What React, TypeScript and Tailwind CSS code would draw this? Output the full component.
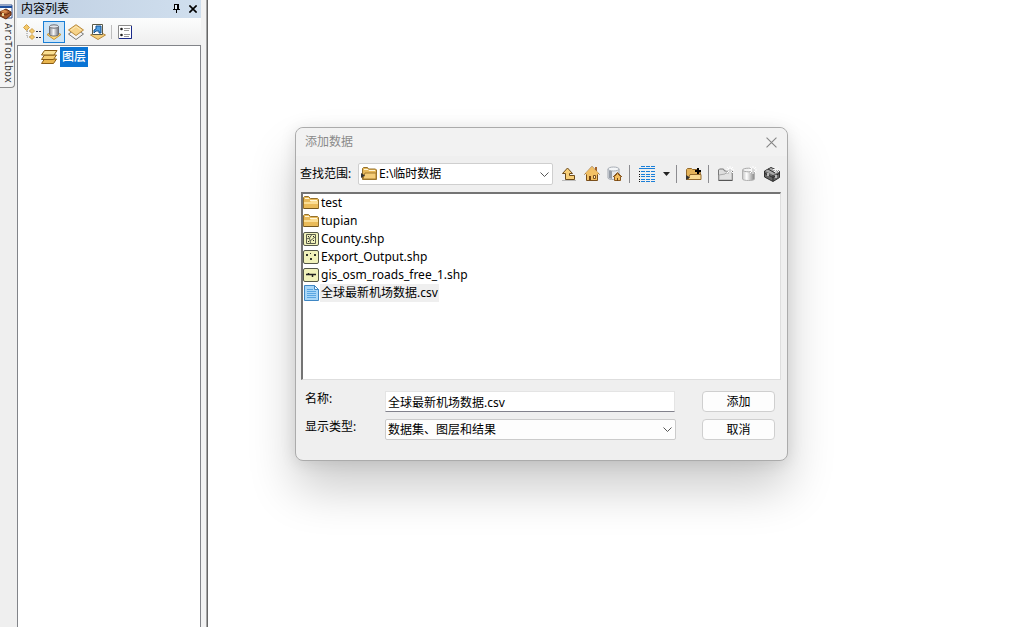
import React from "react";

type IconProps = { className?: string };

const ToolboxTabIcon = () => (
  <svg width="14" height="16" viewBox="0 0 14 16" aria-hidden="true">
    <path d="M0 1h12v13H6" fill="#fff" stroke="#2f4f8f" />
    <path d="M0 2h12v2H0z" fill="#1d4f9e" />
    <path d="M0 8l6-3 5 3v3l-5 4-6-3z" fill="#a8582a" stroke="#5d2b12" />
    <path d="M0 9l6 2 5-3" fill="none" stroke="#6b3212" />
    <path d="M0 7l5-1 3 2-3 1z" fill="#d98d4e" />
    <path d="M2 9h2v3H2z" fill="#e6cf8f" />
  </svg>
);

const DrawingOrderIcon = () => (
  <svg width="18" height="16" viewBox="0 0 18 16" aria-hidden="true">
    <path d="M4 5v8h5M4 7h6" fill="none" stroke="#8c8c8c" strokeDasharray="1 1" />
    <path d="M3.500 .5l3 3-3 3-3-3z" fill="#f3c96a" stroke="#d0a04a" />
    <path d="M9 4.500l2.500 2.500L9 9.500 6.500 7z" fill="#f3c96a" stroke="#d0a04a" />
    <path d="M9 10.500l2.500 2.500L9 15.500 6.500 13z" fill="#f3c96a" stroke="#d0a04a" />
    <path d="M13 7.500h2M16 7.500h2M13 13.500h2M16 13.500h2" stroke="#2b2f45" />
  </svg>
);

const SourceIcon = () => (
  <svg width="16" height="16" viewBox="0 0 16 16" aria-hidden="true">
    <defs>
      <linearGradient id="cylinder" x1="0" x2="1">
        <stop offset="0" stopColor="#85878d" />
        <stop offset="0.450" stopColor="#f5f6f8" />
        <stop offset="1" stopColor="#6d7078" />
      </linearGradient>
    </defs>
    <path d="M1 10.500L8 7l7 3.500-7 5z" fill="#ffd97a" stroke="#c99432" />
    <path d="M3.500 2.500v8c0 2 9 2 9 0v-8z" fill="url(#cylinder)" stroke="#6b6e76" />
    <ellipse cx="8" cy="2.500" rx="4.500" ry="1.700" fill="#e3e5e9" stroke="#6b6e76" />
  </svg>
);

const VisibilityIcon = () => (
  <svg width="16" height="16" viewBox="0 0 16 16" aria-hidden="true">
    <path d="M.5 10L8 5l7.500 5L8 15.500z" fill="#f4f4f4" stroke="#777" />
    <path d="M.5 6L8 .7 15.500 6 8 11.500z" fill="#f6d38a" stroke="#b98a3c" />
    <path d="M3 6l5-3.500L13 6" fill="none" stroke="#fdebb8" />
  </svg>
);

const SelectionIcon = () => (
  <svg width="16" height="16" viewBox="0 0 16 16" aria-hidden="true">
    <path d="M.5 11L8 7l7.500 4L8 15.500z" fill="#f6cf7b" stroke="#b98a3c" />
    <path d="M2.500.5h10v10h-10z" fill="#fff" stroke="#5a5a48" />
    <path d="M6 2h5v7H9V7H6L4 9V6l2-1z" fill="#4fa0e6" stroke="#14508f" />
  </svg>
);

const OptionsIcon = () => (
  <svg width="14" height="14" viewBox="0 0 14 14" aria-hidden="true">
    <path d="M.5.5h13v13H.5z" fill="#fff" stroke="#8b8b8b" />
    <path d="M13.500 1v12.500H1" fill="none" stroke="#1a2a8a" />
    <circle cx="3.500" cy="4" r="1.300" fill="#222" />
    <circle cx="3.500" cy="10" r="1.300" fill="#222" />
    <path d="M6 3.500h6M6 5.500h5M6 9.500h6M6 11.500h5" stroke="#9a9a9a" />
  </svg>
);

const DataFrameIcon = () => (
  <svg width="17" height="14" viewBox="0 0 17 14" aria-hidden="true">
    <path d="M.5 13.500l3-4.500h12l-3 4.500z" fill="#e9b64e" stroke="#8a5c14" />
    <path d="M.5 9.500l3-4.500h12l-3 4.500z" fill="#f6cd72" stroke="#8a5c14" />
    <path d="M.5 5l3-4.500h12.500L13 5z" fill="#fbdf92" stroke="#8a5c14" />
  </svg>
);

const PinIcon = () => (
  <svg width="8" height="10" viewBox="0 0 8 10" aria-hidden="true" shapeRendering="crispEdges">
    <path d="M1 0h5v6H1z" fill="#000" />
    <path d="M2 1h2v5H2z" fill="#e4ecf5" />
    <path d="M0 5h7v1H0zM3 6h1v3H3z" fill="#000" />
  </svg>
);

const CrossIcon = ({ className }: IconProps) => (
  <svg className={className} viewBox="0 0 10 10" fill="none" stroke="currentColor" aria-hidden="true">
    <path d="M.5.5l9 9M9.500.5l-9 9" />
  </svg>
);

const ChevronIcon = ({ className }: IconProps) => (
  <svg className={className} width="9" height="6" viewBox="0 0 9 6" fill="none" stroke="#555" aria-hidden="true">
    <path d="M.5.5l4 4 4-4" />
  </svg>
);

const FolderIcon = ({ className }: IconProps) => (
  <svg className={className} width="16" height="14" viewBox="0 0 16 14" aria-hidden="true">
    <path d="M.5 12.500v-11l1-1h4l2 2h7l1 1v9z" fill="#e7b95a" stroke="#94702b" />
    <path d="M2 2.500h4M7 4.500h7" fill="none" stroke="#fff6d8" />
    <path d="M1 6h6l1-1h7v3H1z" fill="#fbdd93" />
    <path d="M1 8h14v4H1z" fill="#eabb59" />
    <path d="M1 12.500h14" stroke="#74561d" />
  </svg>
);

const FolderConnectionIcon = ({ className }: IconProps) => (
  <svg className={className} width="16" height="14" viewBox="0 0 16 14" aria-hidden="true">
    <path d="M1.500 12.500v-11l1-1h4l1 1.500h7l1 1v9.500z" fill="#e7b95a" stroke="#94702b" />
    <path d="M3 2.500h4l1 1h6" fill="none" stroke="#fff6d8" />
    <path d="M2 12l2-6h11v6z" fill="#f5cd78" stroke="#a57a2d" />
    <path d="M0 6l4 2.500L0 11z" fill="#333" />
  </svg>
);

const PolygonFileIcon = () => (
  <svg width="16" height="14" viewBox="0 0 16 14" aria-hidden="true">
    <rect x=".5" y=".5" width="15" height="13" rx="1.500" fill="#f1f2ba" stroke="#55584a" />
    <path d="M3.500 2.500h9v9h-9zM3.500 7l3-1 2-3M6.500 6l1 5M7 9l5-4" fill="none" stroke="#5b5d4c" />
    <path d="M5 4h1v1H5zM10 4h1v1h-1zM5 9h1v1H5zM10 8h1v1h-1z" fill="#222" />
  </svg>
);

const PointFileIcon = () => (
  <svg width="16" height="14" viewBox="0 0 16 14" aria-hidden="true">
    <rect x=".5" y=".5" width="15" height="13" rx="1.500" fill="#f1f2ba" stroke="#55584a" />
    <path d="M3 4h2v2H3zM7 3h1v1H7zM11 4h2v2h-2zM7 8h2v2H7z" fill="#33352b" />
  </svg>
);

const LineFileIcon = () => (
  <svg width="16" height="14" viewBox="0 0 16 14" aria-hidden="true">
    <rect x=".5" y=".5" width="15" height="13" rx="1.500" fill="#f1f2ba" stroke="#55584a" />
    <path d="M3 6.500h10M5.500 5v2M9.500 6.500V9" fill="none" stroke="#222" strokeWidth="1.500" />
  </svg>
);

const TextFileIcon = () => (
  <svg width="15" height="16" viewBox="0 0 15 16" aria-hidden="true">
    <path d="M.5.5h10l4 4v11H.5z" fill="#a9d7f8" stroke="#3f87c4" />
    <path d="M10.500.5v4h4z" fill="#f2faff" stroke="#3f87c4" />
    <path d="M3 4.500h6M3 6.500h9M3 8.500h9M3 10.500h9M3 12.500h9" stroke="#5aa6e2" />
  </svg>
);

const UpIcon = () => (
  <svg width="16" height="16" viewBox="0 0 16 16" aria-hidden="true">
    <path d="M4.500 13.500v-6h-3l5-5.500 5 5.500h-3v2h5v4z" fill="#f8cf78" stroke="#6b4a1c" />
    <path d="M1 14.500h14" stroke="#bbb" />
  </svg>
);

const HomeIcon = () => (
  <svg width="16" height="16" viewBox="0 0 16 16" aria-hidden="true">
    <path d="M11 1h2v4h-2z" fill="#a3622b" />
    <path d="M2.500 7.500L8 2l5.500 5.500v7h-11z" fill="#f3c164" stroke="#7a4f1c" />
    <path d="M.5 8.500l7.500-8 7.500 8" fill="none" stroke="#7a4f1c" />
    <path d="M2 8l6-6 6 6" fill="none" stroke="#f0bf67" strokeWidth="2" />
    <path d="M5 10h2v4H5z" fill="#6e4215" />
    <path d="M9.500 9.500h2v3h-2z" fill="#fff0bf" stroke="#7a4f1c" />
  </svg>
);

const DefaultGeodatabaseIcon = () => (
  <svg width="16" height="16" viewBox="0 0 16 16" aria-hidden="true">
    <path d="M1 3v9c0 2 11 2 11 0V3z" fill="#e4e7eb" stroke="#9ea4ad" />
    <path d="M2 4v8l3 1V4z" fill="#959ca6" />
    <ellipse cx="6.500" cy="3" rx="5.500" ry="2" fill="#f4f6f8" stroke="#a7adb5" />
    <path d="M7.500 10.500v4h6v-4L10.500 7.500z" fill="#f3bd5d" stroke="#8a571b" />
    <path d="M6 11l4.500-4.500L15 11" fill="none" stroke="#8a571b" />
    <path d="M10 12h1v3h-1z" fill="#6e4215" />
  </svg>
);

const ListViewIcon = () => (
  <svg width="17" height="16" viewBox="0 0 17 16" aria-hidden="true" shapeRendering="crispEdges">
    <path d="M2 0h4v1H2zM7 0h4v1H7zM12 0h4v1h-4zM0 2h16v1H0z" fill="#1b7fd8" />
    <path
      d="M2 5h4v1H2zM7 5h4v1H7zM12 5h4v1h-4zM2 8h4v1H2zM7 8h4v1H7zM12 8h4v1h-4zM2 10h4v1H2zM7 10h4v1H7zM12 10h4v1h-4zM2 13h4v1H2zM7 13h4v1H7zM12 13h4v1h-4zM2 15h4v1H2zM7 15h4v1H7zM12 15h4v1h-4z"
      fill="#1b7fd8"
    />
    <path d="M0 5h1v1H0zM0 8h1v1H0zM0 10h1v1H0zM0 13h1v1H0zM0 15h1v1H0z" fill="#111" />
  </svg>
);

const ConnectFolderIcon = () => (
  <svg width="16" height="16" viewBox="0 0 16 16" aria-hidden="true">
    <path d="M.5 13.500v-10l1-1h4l1 1h5v3h3l-1 7z" fill="#e5b45a" stroke="#946a2c" />
    <path d="M2 13.500l2-5h11v5z" fill="#fbdc93" stroke="#946a2c" />
    <path d="M0 9l4 2.500L0 14z" fill="#333" />
    <path d="M12 2v6M9 5h6" stroke="#000" strokeWidth="2" />
  </svg>
);

const NewFolderIcon = () => (
  <svg width="16" height="16" viewBox="0 0 16 16" aria-hidden="true">
    <path d="M.5 14V4l1-1h4l1 2h8v9z" fill="#dedede" stroke="#777" />
    <path d="M1 14V9l6-1 1-1h6v7z" fill="#e2e2e2" stroke="#aaa" />
    <path d="M.5 14.500h14" stroke="#555" />
    <path d="M12 0v8M8 4h8M9 1l6 6M15 1L9 7" stroke="#fff" />
    <path d="M12 3v2M11 4h2" stroke="#ccc" />
  </svg>
);

const NewGeodatabaseIcon = () => (
  <svg width="16" height="16" viewBox="0 0 16 16" aria-hidden="true">
    <defs>
      <linearGradient id="metal" x1="0" x2="1">
        <stop offset="0" stopColor="#c4c4c4" />
        <stop offset="0.350" stopColor="#ffffff" />
        <stop offset="1" stopColor="#858585" />
      </linearGradient>
    </defs>
    <path d="M1.500 4v9c0 2 12 2 12 0V4z" fill="url(#metal)" stroke="#b0b0b0" />
    <ellipse cx="7.500" cy="4" rx="6" ry="1.800" fill="#f2f2f2" stroke="#aaa" />
    <path d="M12 0v8M8 4h8M9 1l6 6M15 1L9 7" stroke="#fff" />
    <path d="M12 3v2M11 4h2" stroke="#ccc" />
  </svg>
);

const NewToolboxIcon = () => (
  <svg width="16" height="16" viewBox="0 0 16 16" aria-hidden="true">
    <path d="M.5 5L7 1.500l8.500 4v6L9 15.500.5 11z" fill="#666" stroke="#2f2f2f" />
    <path d="M1 5l6-3 8 4-6 3z" fill="#a9a9a9" />
    <path d="M1 7.500l8 4 6-4M9 9v6M4 3l7 4" fill="none" stroke="#2b2b2b" />
    <path d="M3 7h2v3H3zM11 9h2v3h-2z" fill="#b9b9b9" />
    <path d="M12 0v7M9 3.500h7M10 1l5 5M15 1l-5 5" stroke="#f5f5f5" />
  </svg>
);

const files = [
  { name: "test", icon: <FolderIcon /> },
  { name: "tupian", icon: <FolderIcon /> },
  { name: "County.shp", icon: <PolygonFileIcon /> },
  { name: "Export_Output.shp", icon: <PointFileIcon /> },
  { name: "gis_osm_roads_free_1.shp", icon: <LineFileIcon /> },
  { name: "全球最新机场数据.csv", icon: <TextFileIcon /> },
];

const IconButton: React.FC<{
  label: string;
  active?: boolean;
  children: React.ReactNode;
}> = ({ label, active, children }) => (
  <button
    type="button"
    aria-label={label}
    aria-pressed={active}
    className={`flex size-[22px] items-center justify-center border ${
      active ? "border-[#1a7fd6] bg-[#cce4f7]" : "border-transparent"
    }`}
  >
    {children}
  </button>
);

const Separator = () => <span className="mr-[9px] ml-1.5 h-[18px] w-px bg-[#8c8c90]" />;

/** Table of contents docked on the left */
const ContentsPanel = () => (
  <aside className="flex w-[189px] shrink-0 flex-col bg-[#f2f2f2] pr-[5px]">
    <header className="flex h-[18px] items-center bg-linear-to-r from-[#bfcfe2] to-[#d0dfee] pr-1 pl-1">
      <h2 className="flex-1 text-xs leading-4">内容列表</h2>
      <button type="button" aria-label="自动隐藏" className="mr-2">
        <PinIcon />
      </button>
      <button type="button" aria-label="关闭内容列表">
        <CrossIcon className="size-2 stroke-2" />
      </button>
    </header>
    <div className="flex h-[27px] items-center bg-linear-to-b from-[#fcfdfd] to-[#eeeeee] pl-1">
      <IconButton label="按绘制顺序列出">
        <DrawingOrderIcon />
      </IconButton>
      <IconButton label="按源列出" active>
        <SourceIcon />
      </IconButton>
      <IconButton label="按可见性列出">
        <VisibilityIcon />
      </IconButton>
      <IconButton label="按选择列出">
        <SelectionIcon />
      </IconButton>
      <span className="mx-0.5 h-3.5 w-px bg-[#bdbdbd]" />
      <IconButton label="选项">
        <OptionsIcon />
      </IconButton>
    </div>
    <div className="flex-1 border border-b-0 border-[#828489] bg-white pt-px pl-[23px]">
      <div className="flex items-center gap-0.5">
        <DataFrameIcon />
        <button
          type="button"
          className="h-5 bg-[#0a74d4] px-0.5 text-xs leading-5 font-medium text-white"
        >
          图层
        </button>
      </div>
    </div>
  </aside>
);

const AddDataDialog = () => {
  const [selected, setSelected] = React.useState("全球最新机场数据.csv");

  return (
    <div
      role="dialog"
      aria-labelledby="dialog-title"
      className="absolute top-[127px] left-[87px] w-[493px] rounded-lg border border-[#ababab] bg-[#efefef] pb-5 text-xs shadow-[0_28px_48px_rgba(0,0,0,0.2),0_2px_16px_rgba(0,0,0,0.1)]"
    >
      <header className="flex h-7 items-center rounded-t-lg bg-[#f2f2f2] pr-2.5 pl-[9px]">
        <h1 id="dialog-title" className="flex-1 text-[#8a8a8a]">
          添加数据
        </h1>
        <button type="button" aria-label="关闭" className="text-[#858585]">
          <CrossIcon className="size-[11px]" />
        </button>
      </header>

      <div className="flex h-9 items-center pl-1">
        <label htmlFor="look-in" className="w-[58px]">
          查找范围:
        </label>
        <div className="relative">
          <select
            id="look-in"
            className="h-[22px] w-[195px] appearance-none rounded-xs border border-[#cfcfcf] bg-white pl-5"
          >
            <option>E:\临时数据</option>
          </select>
          <FolderConnectionIcon className="pointer-events-none absolute top-1 left-[3px]" />
          <ChevronIcon className="pointer-events-none absolute top-[9px] right-1" />
        </div>
        <div className="ml-2 flex items-center">
          <div className="flex items-center gap-[7px]">
            <button type="button" aria-label="向上一级">
              <UpIcon />
            </button>
            <button type="button" aria-label="转到主目录文件夹">
              <HomeIcon />
            </button>
            <button type="button" aria-label="转到默认地理数据库">
              <DefaultGeodatabaseIcon />
            </button>
          </div>
          <Separator />
          <button type="button" aria-label="视图" className="flex items-center gap-[7px]">
            <ListViewIcon />
            <svg width="7" height="4" viewBox="0 0 7 4" aria-hidden="true">
              <path d="M0 0h7L3.500 4z" fill="#222" />
            </svg>
          </button>
          <Separator />
          <button type="button" aria-label="连接到文件夹">
            <ConnectFolderIcon />
          </button>
          <Separator />
          <div className="flex items-center gap-[7px]">
            <button type="button" aria-label="新建文件夹">
              <NewFolderIcon />
            </button>
            <button type="button" aria-label="新建地理数据库">
              <NewGeodatabaseIcon />
            </button>
            <button type="button" aria-label="新建工具箱">
              <NewToolboxIcon />
            </button>
          </div>
        </div>
      </div>

      <ul className="mr-1.5 ml-[5px] h-[188px] border-t-2 border-r border-b border-l-2 border-t-[#747474] border-r-[#dedede] border-b-[#dedede] border-l-[#747474] bg-white">
        {files.map((file) => (
          <li key={file.name}>
            <button
              type="button"
              onClick={() => setSelected(file.name)}
              className="flex h-[18px] items-center gap-px"
            >
              <span className="flex w-4 justify-center">{file.icon}</span>
              <span
                className={`px-px leading-[18px] ${
                  selected === file.name ? "bg-[#efefef]" : ""
                }`}
              >
                {file.name}
              </span>
            </button>
          </li>
        ))}
      </ul>

      <form
        className="mt-[11px] mr-3 ml-[9px] grid grid-cols-[80px_1fr_73px] gap-y-[7px]"
        onSubmit={(e) => e.preventDefault()}
      >
        <label htmlFor="file-name">名称:</label>
        <input
          id="file-name"
          type="text"
          defaultValue="全球最新机场数据.csv"
          className="mr-[27px] h-[21px] min-w-0 border border-[#e4e4e4] border-b-[#82828c] bg-white px-0.5"
        />
        <button
          type="submit"
          className="h-[21px] rounded border border-[#cfcfcf] bg-[#fdfdfd]"
        >
          添加
        </button>
        <label htmlFor="file-type">显示类型:</label>
        <div className="relative mr-[26px]">
          <select
            id="file-type"
            className="h-[21px] w-full appearance-none rounded-xs border border-[#cbcbcb] bg-[#fdfdfd] px-0.5"
          >
            <option>数据集、图层和结果</option>
          </select>
          <ChevronIcon className="pointer-events-none absolute top-2 right-1" />
        </div>
        <button
          type="button"
          className="h-[21px] rounded border border-[#cfcfcf] bg-[#fdfdfd]"
        >
          取消
        </button>
      </form>
    </div>
  );
};

export default function App() {
  return (
    <div className="flex h-screen overflow-hidden bg-white font-['Noto_Sans','Noto_Sans_CJK_SC',sans-serif] text-black">
      <nav className="w-[17px] shrink-0 bg-[#efefef]">
        <button
          type="button"
          className="flex h-[88px] w-[15px] flex-col items-center rounded-br-sm border-r border-b border-[#8b8b8b] bg-[#f4f4f4] pt-1"
        >
          <ToolboxTabIcon />
          <span className="mt-[3px] font-['Liberation_Mono',monospace] text-[10px] leading-3 text-[#333] [writing-mode:vertical-rl]">
            ArcToolbox
          </span>
        </button>
      </nav>
      <ContentsPanel />
      <div className="w-0.5 shrink-0 border-r border-[#666] bg-[#a6a6a6]" />
      <main className="relative flex-1 bg-white">
        <AddDataDialog />
      </main>
    </div>
  );
}
